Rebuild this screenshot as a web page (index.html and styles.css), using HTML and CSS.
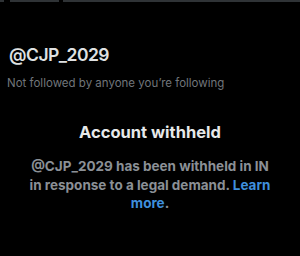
FILE: index.html
```html
<!DOCTYPE html>
<html>
<head>
<meta charset="utf-8">
<link rel="stylesheet" href="styles.css">
</head>
<body>
<div class="page">
  <div class="topbar">
    <span class="seg s1"></span>
    <span class="seg s2"></span>
    <span class="seg s3"></span>
  </div>
  <div class="profile">
    <div class="handle">@CJP_2029</div>
    <div class="followed">Not followed by anyone you’re following</div>
  </div>
  <div class="withheld">
    <div class="title">Account withheld</div>
    <p class="msg">@CJP_2029 has been withheld in IN in response to a legal demand. <a class="link">Learn more</a>.</p>
  </div>
</div>
</body>
</html>
```
FILE: styles.css
```css
html, body {
  margin: 0;
  padding: 0;
  background: #000;
}
.page {
  width: 300px;
  height: 256px;
  background: #000;
  font-family: "Inter", "Liberation Sans", sans-serif;
  overflow: hidden;
}
.topbar {
  display: flex;
  height: 2px;
  gap: 4px;
}
.seg {
  display: block;
  height: 2px;
  background: #2f3336;
}
.s1 { width: 4px; }
.s2 { width: 49px; margin-left: 2px; }
.s3 { flex: 1; }
.profile {
  padding: 41px 8px 0 9px;
}
.handle {
  color: #dfe1e2;
  font-size: 17.5px;
  font-weight: 600;
  letter-spacing: -0.5px;
  line-height: 24px;
}
.followed {
  color: #71767b;
  font-size: 11.5px;
  line-height: 14px;
  margin-top: 9px;
  margin-left: -2px;
}
.withheld {
  padding: 31px 27.5px 0 27.5px;
  text-align: center;
}
.title {
  color: #e7e9ea;
  font-size: 16.5px;
  font-weight: 700;
  line-height: 22px;
}
.msg {
  margin: 14px 0 0 0;
  color: #8b9096;
  font-size: 13.5px;
  font-weight: 700;
  line-height: 18.5px;
}
.link {
  color: #3f8fdd;
}
```
